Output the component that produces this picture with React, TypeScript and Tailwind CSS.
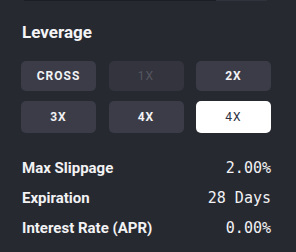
import React from "react";

const btn = "h-[30px] rounded-[5px] flex items-center justify-center text-[12px] font-bold tracking-[1px]";

export default function App() {
  return (
    <div className="w-[296px] h-[252px] bg-[#262930] overflow-hidden" style={{ fontFamily: "Roboto, 'Noto Sans', sans-serif" }}>
      <div className="flex h-px">
        <div className="ml-[24px] w-[192px] bg-[#1c1e24]" />
        <div className="w-[51px] bg-[#30333b]" />
      </div>
      <div className="pl-[21px] pr-[25px]">
        <div className="mt-[21px] text-[17px] font-bold text-[#f4f4f6] leading-[20px] pl-px">Leverage</div>
        <div className="mt-[19px] grid grid-cols-3 gap-x-[12.5px] gap-y-[10px]">
          <div className={`${btn} bg-[#3b3c48] text-[#f2f2f4]`}>CROSS</div>
          <div className={`${btn} bg-[#33343e] text-[#55565f] font-normal`}>1X</div>
          <div className={`${btn} bg-[#3b3c48] text-[#f2f2f4]`}>2X</div>
          <div className={`${btn} h-[32px] bg-[#3b3c48] text-[#f2f2f4]`}>3X</div>
          <div className={`${btn} h-[32px] bg-[#3b3c48] text-[#f2f2f4]`}>4X</div>
          <div className={`${btn} h-[32px] bg-white text-[#2c3142] font-normal`}>4X</div>
        </div>
        <div className="mt-[26px] flex flex-col gap-[12px] pl-px">
          {[
            ["Max Slippage", "2.00%"],
            ["Expiration", "28 Days"],
            ["Interest Rate (APR)", "0.00%"],
          ].map(([l, v]) => (
            <div key={l} className="flex items-center justify-between h-[18px]">
              <span className="text-[15px] font-bold text-[#f2f2f4]">{l}</span>
              <span className="text-[15px] text-[#f2f2f4]" style={{ fontFamily: "'DejaVu Sans Mono', monospace" }}>{v}</span>
            </div>
          ))}
        </div>
      </div>
    </div>
  );
}
